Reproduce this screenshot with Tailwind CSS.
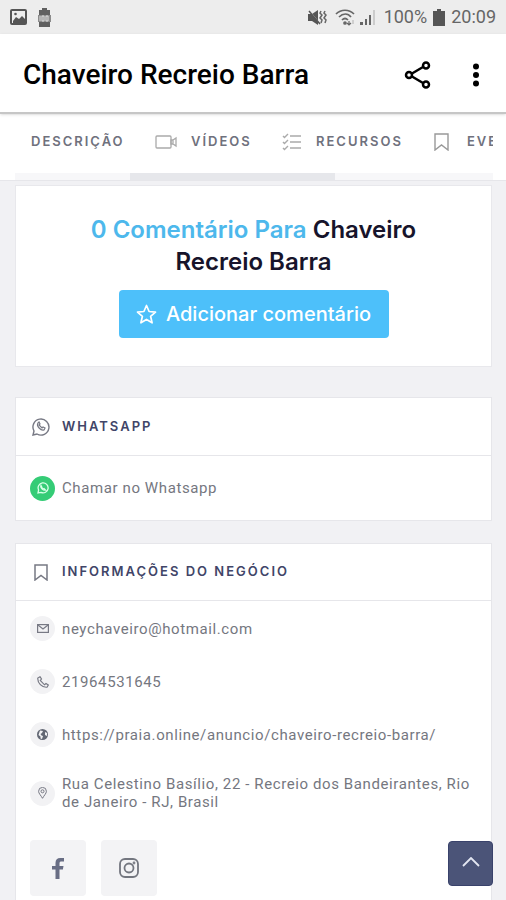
<!DOCTYPE html>
<html lang="pt-BR">
<head>
  <meta charset="UTF-8">
  <meta name="viewport" content="width=device-width, initial-scale=1.0">
  <title>Chaveiro Recreio Barra</title>
  <script src="https://cdn.jsdelivr.net/npm/@tailwindcss/browser@4"></script>
</head>
<body class="flex h-screen flex-col overflow-hidden bg-[#f1f1f4] font-[Roboto,sans-serif] text-[#75777f]">

  <!-- Status bar -->
  <div class="flex h-[34px] shrink-0 items-center justify-between bg-[#ededed] px-[10px] text-[#666]">
    <div class="flex items-center gap-[11px]">
      <svg class="h-4 w-[17px]" viewBox="0 0 17 16" fill="none">
        <rect x="1" y="1" width="15" height="14" rx="1" stroke="#555" stroke-width="2"/>
        <path d="M3 12 6 8l3 2 3-3 3 3v4H3z" fill="#555"/>
        <circle cx="5.500" cy="5" r="1.300" fill="#555"/>
      </svg>
      <svg class="h-[19px] w-[13px]" viewBox="0 0 13 19">
        <path d="M4 0h5v2h3v17H1V2h3z" fill="#606060"/>
        <path d="M0 7h13v7H0z" fill="#8b8b8b"/>
        <path d="M2 8v5M4 8h2v5H4zM8 8h2v5H8z" stroke="#ddd" fill="none"/>
      </svg>
    </div>
    <div class="flex items-center">
      <svg class="mr-2 h-[17px] w-[19px]" viewBox="0 0 19 17" fill="none">
        <path d="M0 5h4l6-4v15l-6-4H0z" fill="#555"/>
        <path d="M1 1l12 15" stroke="#ededed"/>
        <path d="M1 2l11 13" stroke="#555" stroke-width="1.500"/>
        <path d="M13 2l-1 2 2 2-2 3 2 2-1 3M17 2l-1 2 2 2-2 3 2 2-1 3" stroke="#666" stroke-width="1.500"/>
      </svg>
      <svg class="mr-1 h-[17px] w-[21px]" viewBox="0 0 21 17" fill="none" stroke="#666" stroke-width="1.700">
        <path d="M1 5c5-5 13-5 18 0M4 8c4-4 9-4 12 0M7 11c2-2 4-2 6 0"/>
        <circle cx="10" cy="14" r="1" fill="#666"/>
        <path d="M14 16v-4m-2 2 2 2 2-2" stroke-width="1.200"/>
        <path d="M18 11v4" stroke="#bbb" stroke-width="1.200"/>
      </svg>
      <svg class="mr-2 h-4 w-[16px]" viewBox="0 0 16 16">
        <path d="M0 13h3v3H0zM5 10h2v6H5zM9 6h2v10H9z" fill="#666"/>
        <path d="M13 1h2v15h-2z" fill="#ccc"/>
      </svg>
      <span class="text-[18px] leading-6">100%</span>
      <svg class="mx-[6px] h-[17px] w-[12px]" viewBox="0 0 12 17" fill="#555"><path d="M4 0h4v2h4v15H0V2h4z"/></svg>
      <span class="text-[18px] leading-6">20:09</span>
    </div>
  </div>

  <!-- App bar -->
  <header class="relative z-10 flex h-20 shrink-0 items-center border-b-2 border-[#c6c6c6] bg-white pt-[3px] pr-[14px] pl-[23px] shadow-sm">
    <h1 class="flex-1 text-[28px] leading-8 font-medium text-black">Chaveiro Recreio Barra</h1>
    <button class="mr-7" aria-label="Compartilhar">
      <svg class="h-7 w-7" viewBox="0 0 28 28" fill="none" stroke="#000" stroke-width="2.500">
        <path d="M8 12.500 19 6M8 15.500l11 6.500"/>
        <circle cx="5" cy="14" r="3"/><circle cx="22" cy="4.500" r="3"/><circle cx="22" cy="23.500" r="3"/>
      </svg>
    </button>
    <button aria-label="Mais opções">
      <svg class="h-6 w-8" viewBox="0 0 32 24"><circle cx="16" cy="3.500" r="3"/><circle cx="16" cy="12" r="3"/><circle cx="16" cy="20.500" r="3"/></svg>
    </button>
  </header>

  <!-- Section tabs -->
  <nav class="h-[67px] shrink-0 border-b border-[#e6e6ea] bg-white pr-[13px] pl-[15px]">
    <div class="flex h-[59px] items-center overflow-hidden pb-1 pl-4 font-[Inter,sans-serif] text-[13px] font-semibold tracking-[2px] whitespace-nowrap text-[#6f717d]">
      <a href="#descricao" class="mr-[28px] w-[96px] shrink-0">DESCRIÇÃO</a>
      <a href="#videos" class="mr-[30px] flex w-[97px] shrink-0 items-center gap-[14px]">
        <svg class="h-4 w-[22px] shrink-0" viewBox="0 0 22 16" fill="none" stroke="#aaa" stroke-width="1.300"><rect x="1" y="2" width="15" height="12" rx="1"/><path d="M16 6h2l3-2v8l-3-2h-2zM18 6v4"/></svg>
        VÍDEOS
      </a>
      <a href="#recursos" class="mr-[33px] flex w-[119px] shrink-0 items-center gap-[15px]">
        <svg class="h-[18px] w-[19px] shrink-0" viewBox="0 0 19 18" fill="none" stroke="#aaa" stroke-width="1.400"><path d="M1 3l1.500 1.500L6 1M1 9l1.500 1.500L6 7M1 15l1.500 1.500L6 13M8 3h11M8 9h11M8 15h11"/></svg>
        RECURSOS
      </a>
      <a href="#eventos" class="flex shrink-0 items-center gap-[18px]">
        <svg class="h-[18px] w-[15px] shrink-0" viewBox="0 0 15 18" fill="none" stroke="#999" stroke-width="1.400"><path d="M1 1h13v16l-6.500-5L1 17z"/></svg>
        EVENTOS
      </a>
    </div>
    <div class="h-[7px] bg-[#f7f7f9]">
      <div class="ml-[24%] h-full w-[43%] bg-[#e6e7eb]"></div>
    </div>
  </nav>

  <main class="shrink-0 pt-1 pr-[14px] pl-[15px]">
    <section class="flex flex-col items-center border border-[#e8e8ec] bg-white px-12 py-7">
      <h2 class="text-center font-[Inter,sans-serif] text-[24px] leading-8 font-semibold text-[#17142b]">
        <span class="text-[#4db8ec]">0 Comentário Para</span> Chaveiro<br>Recreio Barra
      </h2>
      <button class="mt-3 flex h-12 w-[270px] items-center justify-center gap-[9px] rounded bg-[#4dc0fa] font-[Inter,sans-serif] text-[20px] font-medium text-white">
        <svg class="h-[21px] w-[21px]" viewBox="0 0 21 21" fill="none" stroke="currentColor" stroke-width="1.700" stroke-linejoin="round"><path d="M10.500 1.500l2.600 6 6.400.6-4.900 4.200 1.500 6.500-5.600-3.400-5.600 3.400 1.500-6.500L1.500 8.100l6.400-.6z"/></svg>
        Adicionar comentário
      </button>
    </section>

    <section class="mt-[30px] border border-[#e6e6ea] bg-white">
      <h3 class="flex h-[58px] items-center gap-3 border-b border-[#e6e6ea] px-4 font-[Inter,sans-serif] text-[13px] font-semibold tracking-[2px] text-[#414568]">
        <svg class="h-[18px] w-[18px]" viewBox="0 0 18 18" fill="none" stroke="#777984" stroke-width="1.400"><path d="M1 17l1-4a8 8 0 1 1 3 3z"/><path d="M6 5c-2 3 3 8 6 7l1-2-2-1-1 1-3-3 1-1-1-2z" stroke-width="1.200"/></svg>
        WHATSAPP
      </h3>
      <a href="#whatsapp" class="flex h-16 items-center gap-[7px] px-[14px] text-[15px] tracking-[0.04em]">
        <span class="flex size-[25px] items-center justify-center rounded-full bg-[#35cc76]">
          <svg class="size-3" viewBox="0 0 12 12" fill="none" stroke="#d9ffe7" stroke-width="1.300"><path d="M1 11l.6-3a5 5 0 1 1 2.400 2.400zM4 3.500c-1 2 2 5 4.500 4.500L7 6.500 6 7 5 5.500z"/></svg>
        </span>
        Chamar no Whatsapp
      </a>
    </section>

    <section class="mt-[22px] border border-[#e6e6ea] bg-white pb-8">
      <h3 class="flex h-[57px] items-center gap-[14px] border-b border-[#e6e6ea] pr-4 pl-[18px] font-[Inter,sans-serif] text-[13px] font-semibold tracking-[2px] text-[#414568]">
        <svg class="h-[17px] w-[14px]" viewBox="0 0 14 17" fill="none" stroke="#777984" stroke-width="1.500"><path d="M1 1h12v15l-6-4.500L1 16z"/></svg>
        INFORMAÇÕES DO NEGÓCIO
      </h3>
      <ul class="flex flex-col gap-7 px-[14px] pt-[15px] text-[15px] leading-[18px] tracking-[0.04em]">
        <li>
          <a href="mailto:neychaveiro@hotmail.com" class="flex items-center gap-[7px]">
            <span class="flex size-[25px] shrink-0 items-center justify-center rounded-full bg-[#f2f2f4]">
              <svg class="h-[9px] w-3" viewBox="0 0 12 9" fill="none" stroke="#777984" stroke-width="1.200"><rect x=".6" y=".6" width="10.800" height="7.800"/><path d="M1 1l5 4 5-4"/></svg>
            </span>
            neychaveiro@hotmail.com
          </a>
        </li>
        <li>
          <a href="tel:21964531645" class="flex items-center gap-[7px]">
            <span class="flex size-[25px] shrink-0 items-center justify-center rounded-full bg-[#f2f2f4]">
              <svg class="size-3" viewBox="0 0 12 12" fill="none" stroke="#777984" stroke-width="1.200"><path d="M3 .7L.8 2c-.5 5 4.200 9.700 9.200 9.200L11.300 9 9 7.500 7.500 8.800 3.300 4.500 4.500 3z"/></svg>
            </span>
            21964531645
          </a>
        </li>
        <li>
          <a href="https://praia.online/anuncio/chaveiro-recreio-barra/" class="flex items-center gap-[7px]">
            <span class="flex size-[25px] shrink-0 items-center justify-center rounded-full bg-[#f2f2f4]">
              <svg class="size-[11px]" viewBox="0 0 11 11"><circle cx="5.500" cy="5.500" r="5.500" fill="#636874"/><path d="M3 1.500l3 .5-1 2-1.500 1 1 1.500L6 7 5 10 3.500 9.500V7.500L1.500 6zM8 3l2 1v3L8 6z" fill="#f2f2f4"/></svg>
            </span>
            https://praia.online/anuncio/chaveiro-recreio-barra/
          </a>
        </li>
        <li class="flex items-center gap-[7px]">
          <span class="flex size-[25px] shrink-0 items-center justify-center rounded-full bg-[#f2f2f4]">
            <svg class="h-3 w-[9px]" viewBox="0 0 9 12" fill="none" stroke="#777984"><path d="M4.500 11.300C3 8.500.6 6.500.6 4.300a3.900 3.900 0 0 1 7.800 0c0 2.200-2.400 4.200-3.900 7z"/><circle cx="4.500" cy="4.300" r="1.500"/></svg>
          </span>
          <span>Rua Celestino Basílio, 22 - Recreio dos Bandeirantes, Rio de Janeiro - RJ, Brasil</span>
        </li>
      </ul>
      <div class="mt-[29px] flex gap-[15px] px-[14px]">
        <a href="#facebook" aria-label="Facebook" class="flex size-14 items-center justify-center rounded bg-[#f3f3f5]">
          <svg class="h-[21px] w-3" viewBox="0 0 12 21" fill="#686d84"><path d="M3.500 21v-9.500H0V8h3.500V5C3.500 1.800 5.300 0 8.200 0H12v3.500H9.500C8.200 3.500 7.500 4 7.500 5.300V8h4l-.6 3.500H7.500V21z"/></svg>
        </a>
        <a href="#instagram" aria-label="Instagram" class="flex size-14 items-center justify-center rounded bg-[#f3f3f5]">
          <svg class="size-5" viewBox="0 0 20 20" fill="none" stroke="#73767f" stroke-width="1.800"><rect x="1" y="1" width="18" height="18" rx="5"/><circle cx="10" cy="10" r="4.500"/><circle cx="15" cy="5" r=".5"/></svg>
        </a>
      </div>
    </section>
  </main>

  <button aria-label="Voltar ao topo" class="fixed right-[13px] bottom-[14px] flex size-[45px] items-center justify-center rounded border border-[#39426b] bg-[#4b5478] pb-1">
    <svg class="h-[10px] w-[18px]" viewBox="0 0 18 10" fill="none" stroke="#e3e6f2" stroke-width="1.800"><path d="M1 9l8-8 8 8"/></svg>
  </button>
</body>
</html>
